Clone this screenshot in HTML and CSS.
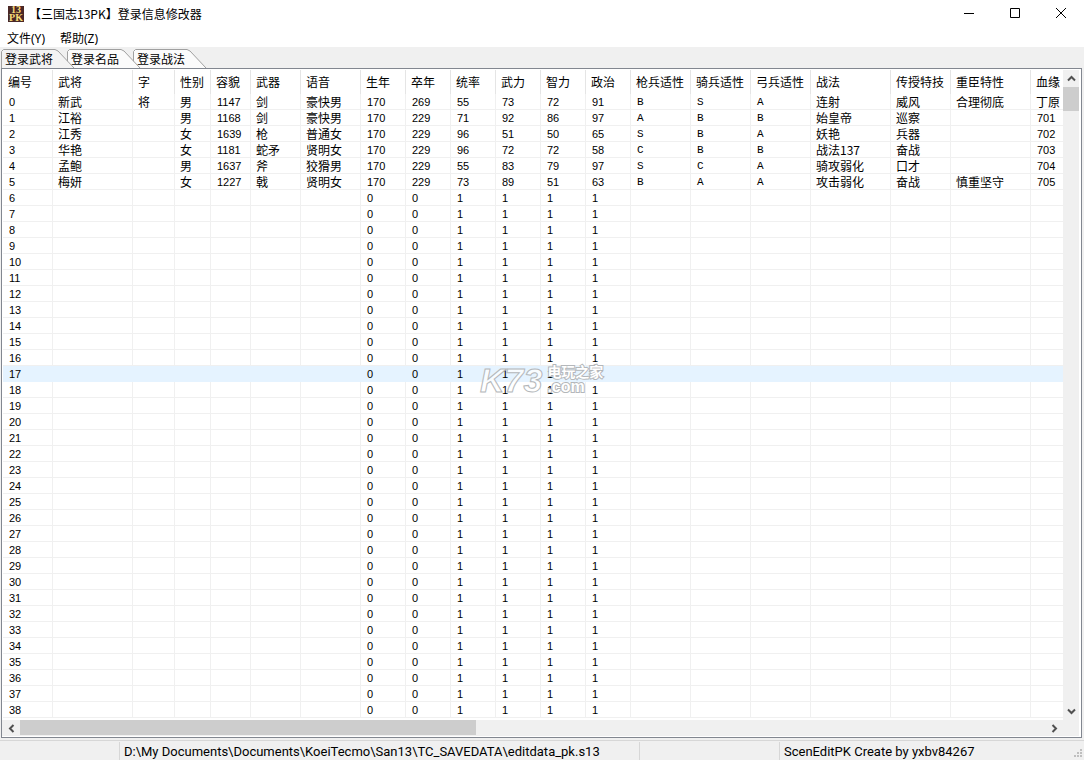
FILE: index.html
```html
<!DOCTYPE html>
<html lang="zh-CN">
<head>
<meta charset="utf-8">
<title>【三国志13PK】登录信息修改器</title>
<link rel="stylesheet" href="styles.css">
</head>
<body>
<div class="window">
  <header class="titlebar">
    <span class="app-icon" aria-hidden="true"><span>13</span><span>PK</span></span>
    <h1 class="title">【三国志13PK】登录信息修改器</h1>
    <div class="controls">
      <button type="button" aria-label="最小化"><svg width="12" height="12"><path d="M1 5.500h10"/></svg></button>
      <button type="button" aria-label="最大化"><svg width="12" height="12"><path d="M1.500 0.500h9v9h-9z"/></svg></button>
      <button type="button" aria-label="关闭"><svg width="12" height="12"><path d="M1 0l10 10M11 0L1 10"/></svg></button>
    </div>
  </header>
  <nav class="menubar">
    <button type="button">文件(Y)</button>
    <button type="button">帮助(Z)</button>
  </nav>
  <div class="tabs" role="tablist">
    <button type="button" role="tab" class="tab" aria-selected="true"><svg width="76" height="19"><path d="M0.500 20V2.500L2.500 0.500H54L57 2L73 19"/></svg><span>登录武将</span></button>
    <button type="button" role="tab" class="tab" aria-selected="false"><svg width="76" height="19"><path d="M0.500 20V2.500L2.500 0.500H54L57 2L73 19"/></svg><span>登录名品</span></button>
    <button type="button" role="tab" class="tab" aria-selected="false"><svg width="76" height="19"><path d="M0.500 20V2.500L2.500 0.500H54L57 2L73 19"/></svg><span>登录战法</span></button>
  </div>
  <main class="panel">
    <div class="view">
      <div class="list">
        <table class="officers">
          <colgroup>
            <col class="w50"><col class="w80"><col class="w42"><col class="w36"><col class="w40"><col class="w50"><col class="w60">
            <col class="w45"><col class="w45"><col class="w45"><col class="w45"><col class="w45"><col class="w45">
            <col class="w60"><col class="w60"><col class="w60"><col class="w80"><col class="w60"><col class="w80"><col>
          </colgroup>
          <thead><tr id="head"></tr></thead>
          <tbody id="rows"></tbody>
        </table>
      </div>
      <div class="vscroll">
        <button type="button" aria-label="向上"><svg width="9" height="9"><path d="M1 6.500L4.500 3L8 6.500"/></svg></button>
        <span class="vthumb"></span>
        <button type="button" class="end" aria-label="向下"><svg width="9" height="9"><path d="M1 2.500L4.500 6L8 2.500"/></svg></button>
      </div>
    </div>
    <div class="hscroll">
      <button type="button" aria-label="向左"><svg width="9" height="9"><path d="M6.500 1L3 4.500L6.500 8"/></svg></button>
      <span class="hthumb"></span>
      <button type="button" class="end" aria-label="向右"><svg width="9" height="9"><path d="M2.500 1L6 4.500L2.500 8"/></svg></button>
    </div>
  </main>
  <footer class="statusbar">
    <span></span>
    <span>D:\My Documents\Documents\KoeiTecmo\San13\TC_SAVEDATA\editdata_pk.s13</span>
    <span></span>
    <span>ScenEditPK Create by yxbv84267</span>
    <svg class="grip" width="10" height="10" aria-hidden="true"><path d="M7 0h2v2H7zM4 3h2v2H4zM7 3h2v2H7zM1 6h2v2H1zM4 6h2v2H4zM7 6h2v2H7z"/></svg>
  </footer>
  <div class="watermark" aria-hidden="true">
    <span class="mark">K73</span>
    <span class="site"><span class="site-name">电玩之家</span><span class="site-com">.com</span></span>
  </div>
</div>
<script src="list.js"></script>
</body>
</html>
```
FILE: styles.css
```css
* { box-sizing: border-box; }
body {
  margin: 0;
  background: #fff;
  color: #000;
  font: 12px/16px "Noto Sans", "Noto Sans CJK SC", sans-serif;
}
button {
  margin: 0;
  padding: 0;
  border: 0;
  background: none;
  color: inherit;
  font: inherit;
}
svg { display: block; }
.window {
  position: relative;
  display: flex;
  flex-direction: column;
  height: 100vh;
  overflow: hidden;
  background: #f0f0f0;
}

/* title bar */
.titlebar {
  display: flex;
  align-items: center;
  height: 27px;
  padding-left: 8px;
  background: #fff;
}
.app-icon {
  display: flex;
  flex-direction: column;
  align-items: center;
  width: 16px;
  height: 16px;
  background: #4a2826;
  color: #f8dc78;
  font: bold 10px/8px "Liberation Serif", serif;
}
.title {
  flex: 1;
  margin: 0 0 0 5px;
  font-size: 12px;
  font-weight: normal;
  font-family: "Noto Sans CJK SC", sans-serif;
}
.controls { display: flex; }
.controls button {
  display: flex;
  align-items: center;
  justify-content: center;
  width: 46px;
  height: 27px;
}
.controls path { fill: none; stroke: #000; }

/* menu */
.menubar {
  display: flex;
  gap: 15px;
  height: 20px;
  padding: 3px 7px 0;
  background: #fff;
}

/* tabs */
.tabs {
  display: flex;
  height: 21px;
  padding: 2px 0 0 1px;
}
.tab {
  position: relative;
  width: 66px;
  height: 19px;
  padding-left: 4px;
  font-family: "Noto Sans CJK SC", sans-serif;
  line-height: 20px;
  text-align: left;
}
.tab:nth-child(1) { z-index: 3; }
.tab:nth-child(2) { z-index: 2; }
.tab:nth-child(3) { z-index: 1; }
.tab svg { position: absolute; left: 0; top: 0; }
.tab path { fill: #fbfbfb; stroke: #a0a0a0; }
.tab[aria-selected="true"] path { fill: #f3f3f3; }
.tab span { position: relative; }

/* list panel */
.panel {
  flex: 1;
  display: flex;
  flex-direction: column;
  min-height: 0;
  margin: 0 2px 2px 1px;
  padding: 1px 2px 1px 0;
  border: 1px solid #828790;
  background: #fff;
}
.view {
  flex: 1;
  display: flex;
  min-height: 0;
}
.list {
  flex: 1;
  min-width: 0;
  overflow: hidden;
  padding-left: 1px;
  font-family: "Noto Sans CJK SC", sans-serif;
}
.officers {
  width: 100%;
  border-collapse: separate;
  border-spacing: 0;
  table-layout: fixed;
}
.w36 { width: 36px; }
.w40 { width: 40px; }
.w42 { width: 42px; }
.w45 { width: 45px; }
.w50 { width: 50px; }
.w60 { width: 60px; }
.w80 { width: 80px; }
.officers th,
.officers td {
  padding: 0 0 0 5px;
  overflow: hidden;
  white-space: nowrap;
  text-align: left;
  font-weight: normal;
}
.officers th {
  height: 24px;
  border-right: 1px solid #e5e5e5;
  line-height: 24px;
}
.officers td {
  height: 16px;
  border-right: 1px solid #f0f0f0;
  border-bottom: 1px solid #f0f0f0;
  line-height: 15px;
}
.officers th:last-child,
.officers td:last-child { border-right: 0; }
.officers .num,
.officers .grade { padding: 1px 0 0 6px; font-size: 11px; line-height: 14px; }
.officers .num { font-family: "Liberation Sans", sans-serif; }
.officers .grade { font-family: "Liberation Mono", monospace; }
.officers .hot td { background: #e5f3ff; border-color: #e5f3ff; }

/* scroll bars */
.vscroll {
  display: flex;
  flex-direction: column;
  width: 16px;
  background: #f0f0f0;
}
.hscroll {
  display: flex;
  height: 16px;
  background: #f0f0f0;
}
.vscroll button,
.hscroll button {
  display: flex;
  align-items: center;
  justify-content: center;
  width: 16px;
  height: 17px;
}
.hscroll button { width: 18px; height: 16px; }
.vscroll path,
.hscroll path { fill: none; stroke: #505050; stroke-width: 2; }
.vthumb { height: 24px; background: #cdcdcd; }
.hthumb { width: 42.3%; height: 15px; background: #cdcdcd; }
.vscroll .end { margin-top: auto; }
.hscroll .end { margin: 0 16px 0 auto; }

/* status bar */
.statusbar {
  position: relative;
  display: grid;
  grid-template-columns: 120px 520px 140px 1fr;
  height: 20px;
  padding-top: 1px;
  border-top: 1px solid #d7d7d7;
}
.statusbar > span {
  padding-left: 4px;
  border-right: 1px solid #d7d7d7;
  white-space: nowrap;
  font: 13px/20px Roboto, "Noto Sans", sans-serif;
}
.statusbar > span:nth-of-type(4) { border-right: 0; }
.grip { position: absolute; right: 1px; bottom: 1px; fill: #bfbfbf; }

/* watermark */
.watermark {
  position: absolute;
  left: 480px;
  top: 364px;
  display: flex;
  gap: 5px;
  color: rgba(255, 255, 255, 0.75);
  font-family: "Liberation Sans", "Noto Sans CJK SC", sans-serif;
  font-weight: bold;
  -webkit-text-stroke: 1px #b4b7ba;
  pointer-events: none;
}
.mark { font-size: 34px; line-height: 32px; font-style: italic; }
.site { display: flex; flex-direction: column; }
.site-name { font-size: 14px; line-height: 17px; paint-order: stroke fill; color: #fff; }
.site-com { font-size: 16px; line-height: 12px; paint-order: stroke fill; color: #fff; }
.site { -webkit-text-stroke: 2px #b4b7ba; }
```
FILE: list.js
```js
const columns = ["编号", "武将", "字", "性别", "容貌", "武器", "语音", "生年", "卒年", "统率", "武力", "智力", "政治",
  "枪兵适性", "骑兵适性", "弓兵适性", "战法", "传授特技", "重臣特性", "血缘"];
const officers = [
  ["新武", "将", "男", "1147", "剑", "豪快男", "170", "269", "55", "73", "72", "91", "B", "S", "A", "连射", "威风", "合理彻底", "丁原"],
  ["江裕", "", "男", "1168", "剑", "豪快男", "170", "229", "71", "92", "86", "97", "A", "B", "B", "始皇帝", "巡察", "", "701"],
  ["江秀", "", "女", "1639", "枪", "普通女", "170", "229", "96", "51", "50", "65", "S", "B", "A", "妖艳", "兵器", "", "702"],
  ["华艳", "", "女", "1181", "蛇矛", "贤明女", "170", "229", "96", "72", "72", "58", "C", "B", "B", "战法137", "奋战", "", "703"],
  ["孟鲍", "", "男", "1637", "斧", "狡猾男", "170", "229", "55", "83", "79", "97", "S", "C", "A", "骑攻弱化", "口才", "", "704"],
  ["梅妍", "", "女", "1227", "戟", "贤明女", "170", "229", "73", "89", "51", "63", "B", "A", "A", "攻击弱化", "奋战", "慎重坚守", "705"]
];
const blank = ["", "", "", "", "", "", "0", "0", "1", "1", "1", "1", "", "", "", "", "", "", ""];

for (const name of columns) {
  const th = document.createElement("th");
  th.textContent = name;
  document.getElementById("head").append(th);
}
for (let i = 0; i < 39; i++) {
  const tr = document.createElement("tr");
  if (i === 17) tr.className = "hot";
  for (const value of [String(i), ...(officers[i] || blank)]) {
    const td = document.createElement("td");
    td.textContent = value;
    if (/^\d+$/.test(value)) td.className = "num";
    else if (/^[A-Z]$/.test(value)) td.className = "grade";
    tr.append(td);
  }
  document.getElementById("rows").append(tr);
}
```
